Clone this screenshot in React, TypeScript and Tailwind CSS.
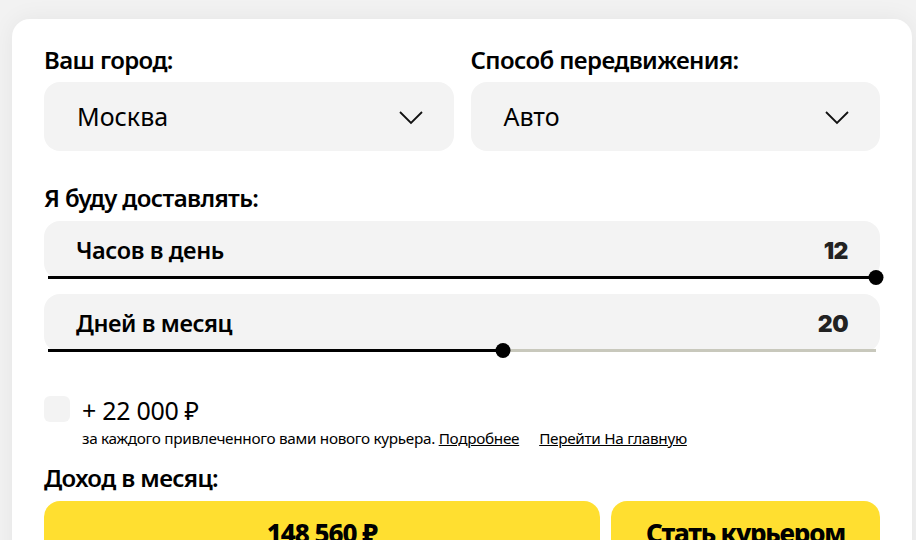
import React, { useState } from 'react';

const Chevron: React.FC = () => (
  <svg width="26" height="16" viewBox="0 0 26 16" fill="none">
    <polyline points="2,3 13,14 24,3" stroke="#111" strokeWidth="1.8" fill="none" />
  </svg>
);

const Select: React.FC<{ label: string; value: string }> = ({ label, value }) => (
  <div className="flex flex-col flex-1">
    <div className="text-[24px] leading-[28px] font-semibold tracking-[-0.6px] text-black mb-[8px]">{label}</div>
    <div className="h-[69px] rounded-[16px] bg-[#f3f3f3] flex items-center justify-between pl-[33px] pr-[30px]">
      <span className="text-[25px] text-black">{value}</span>
      <Chevron />
    </div>
  </div>
);

const Slider: React.FC<{ label: string; value: number; percent: number }> = ({ label, value, percent }) => (
  <div className="relative h-[58px] rounded-[16px] bg-[#f3f3f3] flex items-center justify-between pl-[32px] pr-[32px] pt-[2px]">
    <span className="text-[23.5px] font-semibold tracking-[-0.4px] text-black">{label}</span>
    <span className="text-[23px] font-black tracking-[-0.5px] text-[#222]" style={{ fontFamily: 'Inter, sans-serif' }}>
      {value}
    </span>
    <div className="absolute left-[4px] right-[4px] bottom-[0px] h-[3px] bg-[#c8c8bc]">
      <div className="h-full bg-black" style={{ width: `${percent}%` }} />
    </div>
    <div
      className="absolute bottom-[-6px] w-[15px] h-[15px] rounded-full bg-black -translate-x-1/2"
      style={{ left: `calc(4px + (100% - 8px) * ${percent / 100})` }}
    />
  </div>
);

export default function App() {
  const [checked, setChecked] = useState(false);

  return (
    <div
      className="min-h-[540px] bg-[#f2f2f2] pt-[19px] pl-[12px] overflow-hidden"
      style={{ fontFamily: '"Noto Sans", "Open Sans", sans-serif' }}>
      <div className="w-[900px] bg-white rounded-[18px] shadow-[0_0_24px_rgba(0,0,0,0.06)] px-[32px] pt-[27px] pb-[40px]">
        <div className="flex gap-[17px]">
          <Select label="Ваш город:" value="Москва" />
          <Select label="Способ передвижения:" value="Авто" />
        </div>

        <div className="mt-[33px] text-[24px] leading-[28px] font-semibold tracking-[-0.6px] text-black mb-[9px]">
          Я буду доставлять:
        </div>
        <div className="flex flex-col gap-[15px]">
          <Slider label="Часов в день" value={12} percent={100} />
          <Slider label="Дней в месяц" value={20} percent={55} />
        </div>

        <div className="mt-[44px] flex gap-[12px]">
          <button
            onClick={() => setChecked(!checked)}
            className="w-[26px] h-[26px] rounded-[6px] bg-[#f3f3f3] shrink-0"
          />
          <div className="flex flex-col">
            <div className="text-[25px] leading-[28px] tracking-[-0.3px] text-black">+ 22 000 ₽</div>
            <div className="mt-[5px] text-[15.3px] leading-[18px] tracking-[-0.3px] text-black flex">
              <span>
                за каждого привлеченного вами нового курьера.{' '}
                <a href="#" className="underline">Подробнее</a>
              </span>
              <a href="#" className="underline ml-[20px]">Перейти На главную</a>
            </div>
          </div>
        </div>

        <div className="mt-[17px] text-[24px] leading-[28px] font-semibold tracking-[-0.6px] text-black mb-[9px]">
          Доход в месяц:
        </div>
        <div className="flex gap-[11px]">
          <div className="flex-1 h-[64px] rounded-[16px] bg-[#ffdf30] flex items-center justify-center">
            <span className="text-[26px] font-extrabold tracking-[-1px] text-black">148 560 ₽</span>
          </div>
          <button className="w-[269px] h-[64px] rounded-[16px] bg-[#ffdf30] flex items-center justify-center">
            <span className="text-[26px] font-extrabold tracking-[-1.2px] text-black">Стать курьером</span>
          </button>
        </div>
      </div>
    </div>
  );
}
